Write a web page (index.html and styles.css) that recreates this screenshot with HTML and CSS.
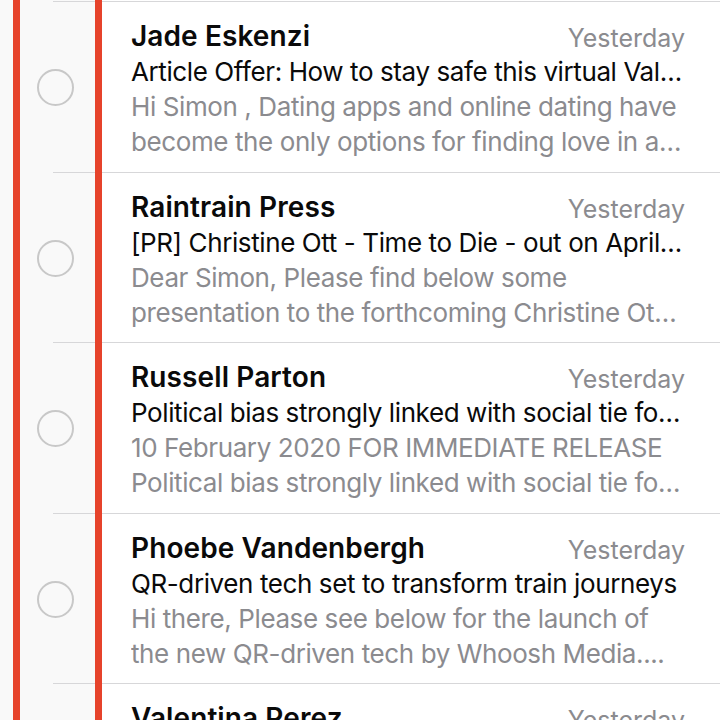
FILE: index.html
```html
<!DOCTYPE html>
<html>
<head>
<meta charset="utf-8">
<link rel="stylesheet" href="styles.css">
</head>
<body>
<div class="screen">
  <div class="list">
    <div class="row">
      <div class="select"><span class="radio"></span></div>
      <div class="content">
        <div class="head"><span class="sender">Jade Eskenzi</span><span class="date">Yesterday</span></div>
        <div class="subject">Article Offer: How to stay safe this virtual Val…</div>
        <div class="preview">Hi Simon , Dating apps and online dating have</div>
        <div class="preview">become the only options for finding love in a…</div>
      </div>
    </div>
    <div class="row">
      <div class="select"><span class="radio"></span></div>
      <div class="content">
        <div class="head"><span class="sender">Raintrain Press</span><span class="date">Yesterday</span></div>
        <div class="subject">[PR] Christine Ott - Time to Die - out on April…</div>
        <div class="preview">Dear Simon, Please find below some</div>
        <div class="preview">presentation to the forthcoming Christine Ot…</div>
      </div>
    </div>
    <div class="row">
      <div class="select"><span class="radio"></span></div>
      <div class="content">
        <div class="head"><span class="sender">Russell Parton</span><span class="date">Yesterday</span></div>
        <div class="subject">Political bias strongly linked with social tie fo…</div>
        <div class="preview">10 February 2020 FOR IMMEDIATE RELEASE</div>
        <div class="preview">Political bias strongly linked with social tie fo…</div>
      </div>
    </div>
    <div class="row">
      <div class="select"><span class="radio"></span></div>
      <div class="content">
        <div class="head"><span class="sender">Phoebe Vandenbergh</span><span class="date">Yesterday</span></div>
        <div class="subject">QR-driven tech set to transform train journeys</div>
        <div class="preview">Hi there, Please see below for the launch of</div>
        <div class="preview">the new QR-driven tech by Whoosh Media....</div>
      </div>
    </div>
    <div class="row">
      <div class="select"><span class="radio"></span></div>
      <div class="content">
        <div class="head"><span class="sender">Valentina Perez</span><span class="date">Yesterday</span></div>
        <div class="subject">&nbsp;</div>
        <div class="preview">&nbsp;</div>
        <div class="preview">&nbsp;</div>
      </div>
    </div>
  </div>
  <span class="bar bar-outer"></span>
  <span class="bar bar-inner"></span>
</div>
</body>
</html>
```
FILE: styles.css
```css
html, body {
  margin: 0;
  padding: 0;
}
body {
  width: 720px;
  height: 720px;
  overflow: hidden;
  background: #ffffff;
  font-family: Inter, "Noto Sans", sans-serif;
  -webkit-font-smoothing: antialiased;
}
.screen {
  position: relative;
  width: 720px;
  height: 720px;
  overflow: hidden;
  background: linear-gradient(to right, #f9f9f9 0, #f9f9f9 95px, #ffffff 95px);
}
.list {
  padding-top: 1px;
  display: flex;
  flex-direction: column;
}
.row {
  height: 170.5px;
  flex: none;
  display: flex;
  background: linear-gradient(#d7d7d9, #d7d7d9) 53px 0 / 100% 1px no-repeat;
}
.select {
  width: 131px;
  flex: none;
  display: flex;
  align-items: flex-start;
}
.radio {
  box-sizing: border-box;
  width: 37px;
  height: 37px;
  margin: 68px 0 0 37px;
  border: 2px solid #c8c8c8;
  border-radius: 50%;
}
.content {
  flex: 1;
  min-width: 0;
  padding: 16px 35px 0 0;
}
.head {
  display: flex;
  justify-content: space-between;
  align-items: baseline;
  height: 35px;
  padding-top: 2px;
}
.sender {
  font-size: 28px;
  font-weight: 600;
  color: #0a0a0a;
  letter-spacing: 0.1px;
}
.date {
  font-size: 25px;
  color: #8b8b8f;
  letter-spacing: 0;
  position: relative;
  top: 1px;
}
.subject, .preview {
  font-size: 26px;
  line-height: 35px;
  white-space: nowrap;
  overflow: hidden;
  text-overflow: ellipsis;
  letter-spacing: -0.4px;
}
.subject {
  color: #0a0a0a;
}
.preview {
  color: #8b8b8f;
}
.bar {
  position: absolute;
  top: 0;
  bottom: 0;
  width: 7px;
  background: #e6432b;
}
.bar-outer {
  left: 13px;
}
.bar-inner {
  left: 95px;
}
```
